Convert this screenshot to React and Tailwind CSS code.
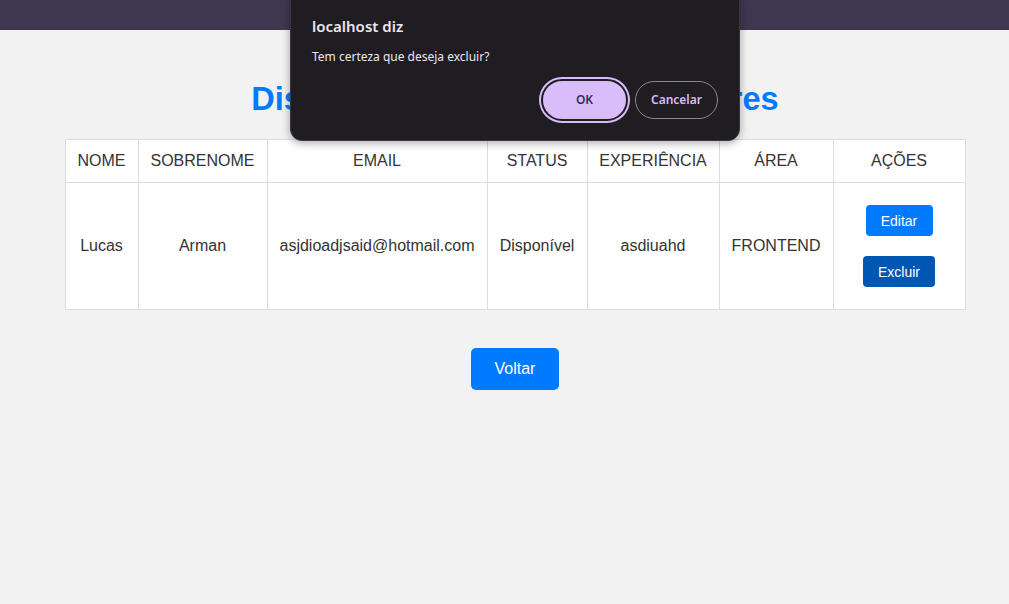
import React from 'react';

// Linha de exemplo da tabela
const colaboradores = [
    {
        nome: 'Lucas',
        sobrenome: 'Arman',
        email: 'asjdioadjsaid@hotmail.com',
        status: 'Disponível',
        experiencia: 'asdiuahd',
        area: 'FRONTEND',
    },
];

const colunas = [
    { titulo: 'NOME', largura: 'w-[73px]' },
    { titulo: 'SOBRENOME', largura: 'w-[129px]' },
    { titulo: 'EMAIL', largura: 'w-[220px]' },
    { titulo: 'STATUS', largura: 'w-[100px]' },
    { titulo: 'EXPERIÊNCIA', largura: 'w-[132px]' },
    { titulo: 'ÁREA', largura: 'w-[114px]' },
    { titulo: 'AÇÕES', largura: 'w-[132px]' },
];

export default function App() {
    return (
        <div className="relative min-h-[604px] w-full bg-[#f2f2f2] text-[#333] font-['Liberation_Sans',Arial,sans-serif]">
            <header className="h-[30px] bg-[#3f3850]" />

            <main className="flex flex-col items-center pt-[51px] pl-[21px]">
                <h1 className="text-[32.5px] leading-[37px] font-bold text-[#007bff] mb-[21px]">
                    Disponibilidade de Colaboradores
                </h1>

                <table className="w-[900px] table-fixed border-collapse bg-white text-base">
                    <thead>
                        <tr className="h-[43px]">
                            {colunas.map((c) => (
                                <th key={c.titulo} className={`${c.largura} border border-[#ddd] font-normal text-center px-0`}>
                                    {c.titulo}
                                </th>
                            ))}
                        </tr>
                    </thead>
                    <tbody>
                        {colaboradores.map((p, i) => (
                            <tr key={i} className="h-[127px] text-center">
                                <td className="border border-[#ddd]">{p.nome}</td>
                                <td className="border border-[#ddd]">{p.sobrenome}</td>
                                <td className="border border-[#ddd]">{p.email}</td>
                                <td className="border border-[#ddd]">{p.status}</td>
                                <td className="border border-[#ddd]">{p.experiencia}</td>
                                <td className="border border-[#ddd]">{p.area}</td>
                                <td className="border border-[#ddd]">
                                    <div className="flex flex-col items-center gap-5">
                                        <button className="h-[31px] w-[67px] rounded-[4px] bg-[#007bff] text-white text-sm">Editar</button>
                                        <button className="h-[31px] w-[72px] rounded-[4px] bg-[#0056b3] text-white text-sm">Excluir</button>
                                    </div>
                                </td>
                            </tr>
                        ))}
                    </tbody>
                </table>

                <button className="mt-[38px] h-[42px] w-[88px] rounded-[5px] bg-[#007bff] text-white text-base">Voltar</button>
            </main>

            {/* alerta do navegador */}
            <div className="absolute left-[290px] top-[-12px] w-[450px] pt-[27px] pb-[19px] px-[21px] rounded-[12px] bg-[#1f1c22] border border-[#3a3640] shadow-[0_2px_8px_rgba(0,0,0,0.35)] font-['Noto_Sans','Open_Sans',sans-serif] text-[#ece6f2]">
                <div className="text-[15px] leading-[20px] font-semibold">localhost diz</div>
                <div className="mt-[12px] text-[12px] leading-[17px]">Tem certeza que deseja excluir?</div>
                <div className="mt-[14px] flex justify-end items-center gap-[7px]">
                    <button className="h-[42px] w-[87px] rounded-full bg-[#d8bdfa] text-[#3b2a5c] text-[12px] font-semibold border-2 border-[#1f1c22] ring-2 ring-[#d8bdfa]">
                        OK
                    </button>
                    <button className="h-[38px] w-[83px] rounded-full border border-[#8b8592] text-[#d8bdfa] text-[12px] font-semibold">
                        Cancelar
                    </button>
                </div>
            </div>
        </div>
    );
}
